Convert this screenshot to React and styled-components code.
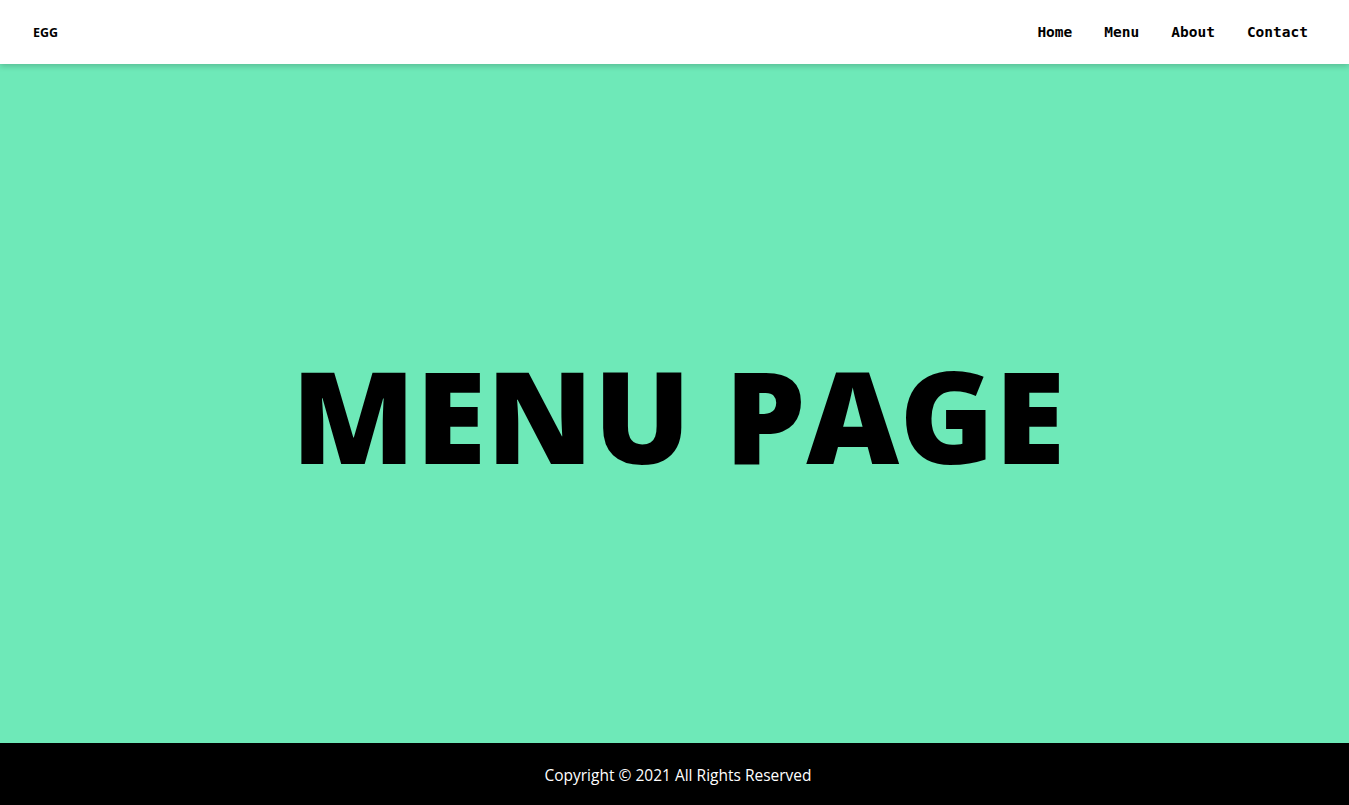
import React from 'react'
import styled, { createGlobalStyle } from 'styled-components'

const Global = createGlobalStyle`
  * { box-sizing: border-box; }
  body {
    margin: 0;
    font-family: 'Open Sans', 'Noto Sans', sans-serif;
  }
`

const Page = styled.div`
  display: flex;
  flex-direction: column;
  min-height: 100vh;
`

const Nav = styled.nav`
  height: 64px;
  display: flex;
  align-items: center;
  justify-content: space-between;
  padding: 0 41px 0 33px;
  background: #fff;
  box-shadow: 0 2px 6px rgba(0, 0, 0, 0.2);
  position: relative;
  z-index: 1;
`

const Logo = styled.div`
  font-family: 'Open Sans', sans-serif;
  font-weight: 700;
  font-size: 12.5px;
  color: #000;
`

const Links = styled.ul`
  display: flex;
  gap: 32px;
  list-style: none;
  margin: 0;
  padding: 0;
`

const Link = styled.li`
  font-family: 'DejaVu Sans Mono', 'Liberation Mono', monospace;
  font-weight: 700;
  font-size: 14.5px;
  color: #000;
  cursor: pointer;
`

const Hero = styled.main`
  flex: 1;
  display: flex;
  align-items: center;
  justify-content: center;
  padding-left: 8px;
  background: #6ee9b8;

  h1 {
    margin: 22px 0 0;
    font-family: 'Open Sans', sans-serif;
    font-weight: 800;
    font-size: 128px;
    letter-spacing: 0.5px;
    color: #000;
  }
`

const Footer = styled.footer`
  height: 62px;
  display: flex;
  align-items: center;
  justify-content: center;
  padding: 2px 0 0 7px;
  background: #000;
  color: #fff;
  font-size: 15.5px;
`

export default function App() {
  return (
    <Page>
      <Global />
      <Nav>
        <Logo>EGG</Logo>
        <Links>
          <Link>Home</Link>
          <Link>Menu</Link>
          <Link>About</Link>
          <Link>Contact</Link>
        </Links>
      </Nav>
      <Hero>
        <h1>MENU PAGE</h1>
      </Hero>
      <Footer>Copyright © 2021 All Rights Reserved</Footer>
    </Page>
  )
}
